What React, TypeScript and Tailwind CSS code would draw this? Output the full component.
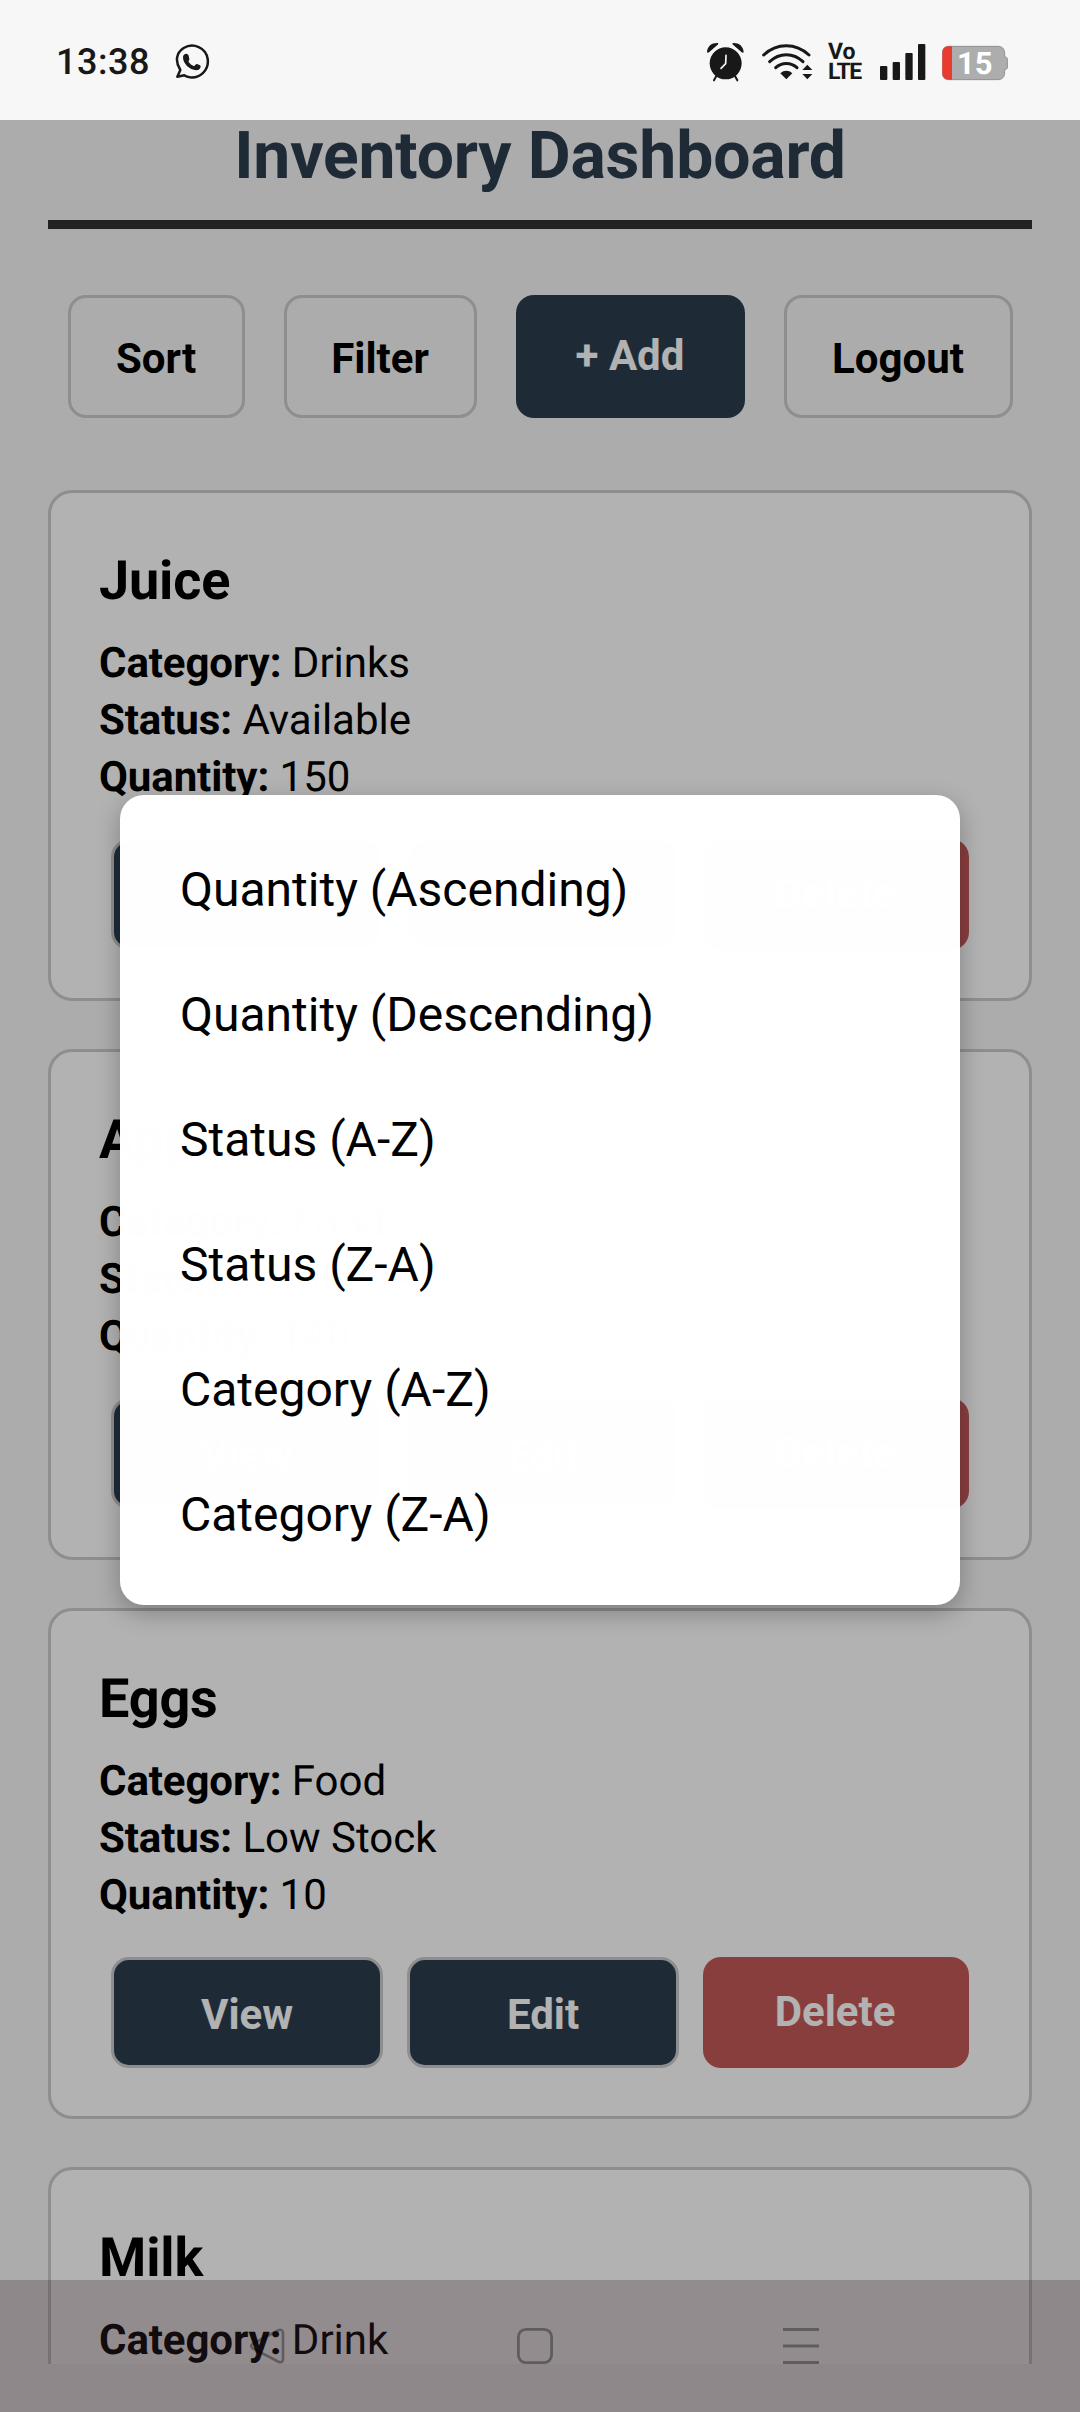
import React from "react";

type Item = { name: string; category: string; status: string; quantity: string };

const items: Item[] = [
  { name: "Juice", category: "Drinks", status: "Available", quantity: "150" },
  { name: "Apple", category: "Food", status: "Available", quantity: "140" },
  { name: "Eggs", category: "Food", status: "Low Stock", quantity: "10" },
  { name: "Milk", category: "Drink", status: "Available", quantity: "50" },
];

const sortOptions = [
  "Quantity (Ascending)",
  "Quantity (Descending)",
  "Status (A-Z)",
  "Status (Z-A)",
  "Category (A-Z)",
  "Category (Z-A)",
];

function StatusBar() {
  return (
    <header className="flex h-[120px] shrink-0 items-start bg-[#f7f7f7] pl-[56px] pr-[72px] text-[#181818]">
      <span className="mt-[41px] w-[119px] text-[36px] leading-[42px] font-medium tracking-[0.5px]">13:38</span>
      <svg className="mt-[44px]" width="35" height="36" viewBox="525 132 105 108" fill="none">
        <path
          d="M532 230L541 210C524 184 529 158 551 144C580 127 618 143 623 177C628 211 599 235 570 232C564 231 558 229 553 226L532 230Z"
          stroke="currentColor"
          strokeWidth="7.5"
          strokeLinejoin="round"
        />
        <path
          d="M552 164C557 159 564 161 566 167L568 177C569 181 564 183 566 186C570 192 575 196 581 198C585 199 587 191 591 192L600 196C605 200 599 209 594 210C572 214 548 191 549 171C549 168 550 166 552 164Z"
          fill="currentColor"
        />
      </svg>
      <div className="mt-[42px] ml-auto flex">
        <svg width="38" height="40" viewBox="81 66 114 120" fill="none">
          <circle cx="137" cy="130" r="48" fill="currentColor" />
          <path d="M81 96C82 78 96 68 113 69C115 70 115 72 113 74L87 97C84 99 81 99 81 96ZM191 96C190 78 176 68 159 69C157 70 157 72 159 74L185 97C188 99 191 99 191 96Z" fill="currentColor" />
          <path d="M109 168L102 181M165 168L172 181" stroke="currentColor" strokeWidth="6" strokeLinecap="round" />
          <path d="M138 106L137 131L123 145" stroke="#f7f7f7" strokeWidth="5" strokeLinecap="round" strokeLinejoin="round" />
        </svg>
        <svg className="ml-[17px]" width="51" height="40" viewBox="245 66 153 120" fill="none">
          <g stroke="currentColor" strokeWidth="9" strokeLinecap="round">
            <path d="M250 105C289 68 346 68 386 105" />
            <path d="M268 125C297 97 339 97 368 125" />
            <path d="M286 143C304 126 332 126 350 143" />
          </g>
          <path d="M300 160C311 150 325 150 336 160L318 178Z" fill="currentColor" />
          <path d="M381 134L396 150H366ZM381 178L396 162H366Z" fill="currentColor" />
        </svg>
        <div className="ml-[15px] flex w-[36px] flex-col text-[23px] leading-[20px] font-bold">
          <span className="h-[20px]">Vo</span>
          <span className="h-[20px] tracking-[-1.4px]">LTE</span>
        </div>
        <svg className="ml-[16px]" width="46" height="40" viewBox="600 66 138 120" fill="currentColor">
          <rect x="600" y="138" width="22" height="42" rx="3" />
          <rect x="638" y="126" width="22" height="54" rx="3" />
          <rect x="676" y="99" width="22" height="81" rx="3" />
          <rect x="714" y="72" width="22" height="108" rx="3" />
        </svg>
        <div className="relative ml-[16px] h-[40px] w-[66px]">
          <svg width="66" height="40" viewBox="786 66 198 120">
            <path d="M807 79H954C966 79 974 87 974 99V110C980 111 983 114 983 119V141C983 145 980 148 974 149V159C974 171 966 179 954 179H807C794 179 787 171 787 159V99C787 87 794 79 807 79Z" fill="#adadad" stroke="#858585" strokeWidth="2.5" />
            <path d="M816 79H807C794 79 787 87 787 99V159C787 171 794 179 807 179H816Z" fill="#ea3b30" />
          </svg>
          <span className="absolute top-[4px] left-[15px] text-[31px] leading-[36px] font-bold text-white">15</span>
        </div>
      </div>
    </header>
  );
}

function OutlineButton({ label, className }: { label: string; className: string }) {
  return (
    <button className={`flex h-[123px] items-center justify-center rounded-[18px] border-[3px] border-[#ccc] pt-[3px] text-black ${className}`}>
      {label}
    </button>
  );
}

function Field({ label, value }: { label: string; value: string }) {
  return (
    <p className="h-[57px] leading-[57px]">
      <span className="font-bold tracking-[-0.1px]">{label}:</span> {value}
    </p>
  );
}

function Card({ item }: { item: Item }) {
  return (
    <article className="h-[511px] shrink-0 rounded-[24px] border-[3px] border-[#ccc] bg-white px-[48px] pt-[48px] text-[42px] text-black">
      <h2 className="h-[94px] pt-[9px] text-[54px] leading-[64px] font-bold tracking-[-0.15px]">{item.name}</h2>
      <Field label="Category" value={item.category} />
      <Field label="Status" value={item.status} />
      <Field label="Quantity" value={item.quantity} />
      <div className="mt-[33px] flex justify-center gap-[24px] font-bold text-white">
        <button className="h-[111px] w-[272px] rounded-[18px] border-[3px] border-[#ccc] bg-[#2c3e50] pt-[3px]">View</button>
        <button className="h-[111px] w-[272px] rounded-[18px] border-[3px] border-[#ccc] bg-[#2c3e50] pt-[3px]">Edit</button>
        <button className="h-[111px] w-[266px] rounded-[18px] bg-[#c55959] pr-[2px] pb-[3px]">Delete</button>
      </div>
    </article>
  );
}

function NavBar() {
  return (
    <nav className="absolute inset-x-0 bottom-0 flex h-[132px] items-start bg-[rgba(64,43,54,0.28)] pt-[48px] pl-[249px] text-black/34">
      <svg width="36" height="36" viewBox="0 0 36 36" fill="none" stroke="currentColor" strokeWidth="2.6">
        <path d="M29 2.5L4 15.5C1.5 17 1.5 19 4 20.5L29 33.5C32 35 34 34 34 31V5C34 2 32 1 29 2.5Z" />
      </svg>
      <svg className="ml-[232px]" width="36" height="36" viewBox="0 0 36 36" fill="none" stroke="currentColor" strokeWidth="2.8">
        <rect x="1.4" y="1.4" width="33.2" height="33.2" rx="7.5" />
      </svg>
      <svg className="ml-[230px]" width="36" height="36" viewBox="0 0 36 36" fill="currentColor">
        <rect width="36" height="3" />
        <rect y="16.5" width="36" height="3" />
        <rect y="33" width="36" height="3" />
      </svg>
    </nav>
  );
}

export default function App() {
  return (
    <div className="relative flex h-[2412px] w-[1080px] flex-col overflow-hidden bg-[#f6f6f6] font-['Roboto',sans-serif] [text-rendering:geometricPrecision]">
      <StatusBar />
      <main className="flex h-[2244px] flex-col overflow-hidden px-[48px]">
        <h1 className="-mt-[2px] h-[78px] shrink-0 text-center text-[66px] leading-[78px] font-bold tracking-[-0.15px] text-[#2c3e50]">
          Inventory Dashboard
        </h1>
        <div className="mt-[24px] h-[9px] shrink-0 bg-[#333]" />
        <div className="mt-[66px] flex justify-center gap-[39px] text-[42px] font-bold">
          <OutlineButton label="Sort" className="w-[177px]" />
          <OutlineButton label="Filter" className="w-[193px]" />
          <button className="h-[123px] w-[229px] rounded-[18px] bg-[#2c3e50] pb-[3px] text-white">+ Add</button>
          <OutlineButton label="Logout" className="w-[229px]" />
        </div>
        <section className="mt-[72px] flex flex-col gap-[48px]">
          {items.map((item) => (
            <Card key={item.name} item={item} />
          ))}
        </section>
      </main>
      <div className="absolute inset-x-0 top-[120px] bottom-0 bg-black/30" />
      <div className="absolute top-[795px] left-[120px] flex h-[810px] w-[840px] flex-col rounded-[24px] bg-[rgba(255,255,255,0.995)] py-[30px] text-[48px] text-black shadow-[0_8px_24px_rgba(0,0,0,0.27)]">
        {sortOptions.map((option) => (
          <button key={option} className="h-[125px] px-[60px] pt-[4px] text-left">
            {option}
          </button>
        ))}
      </div>
      <NavBar />
    </div>
  );
}
